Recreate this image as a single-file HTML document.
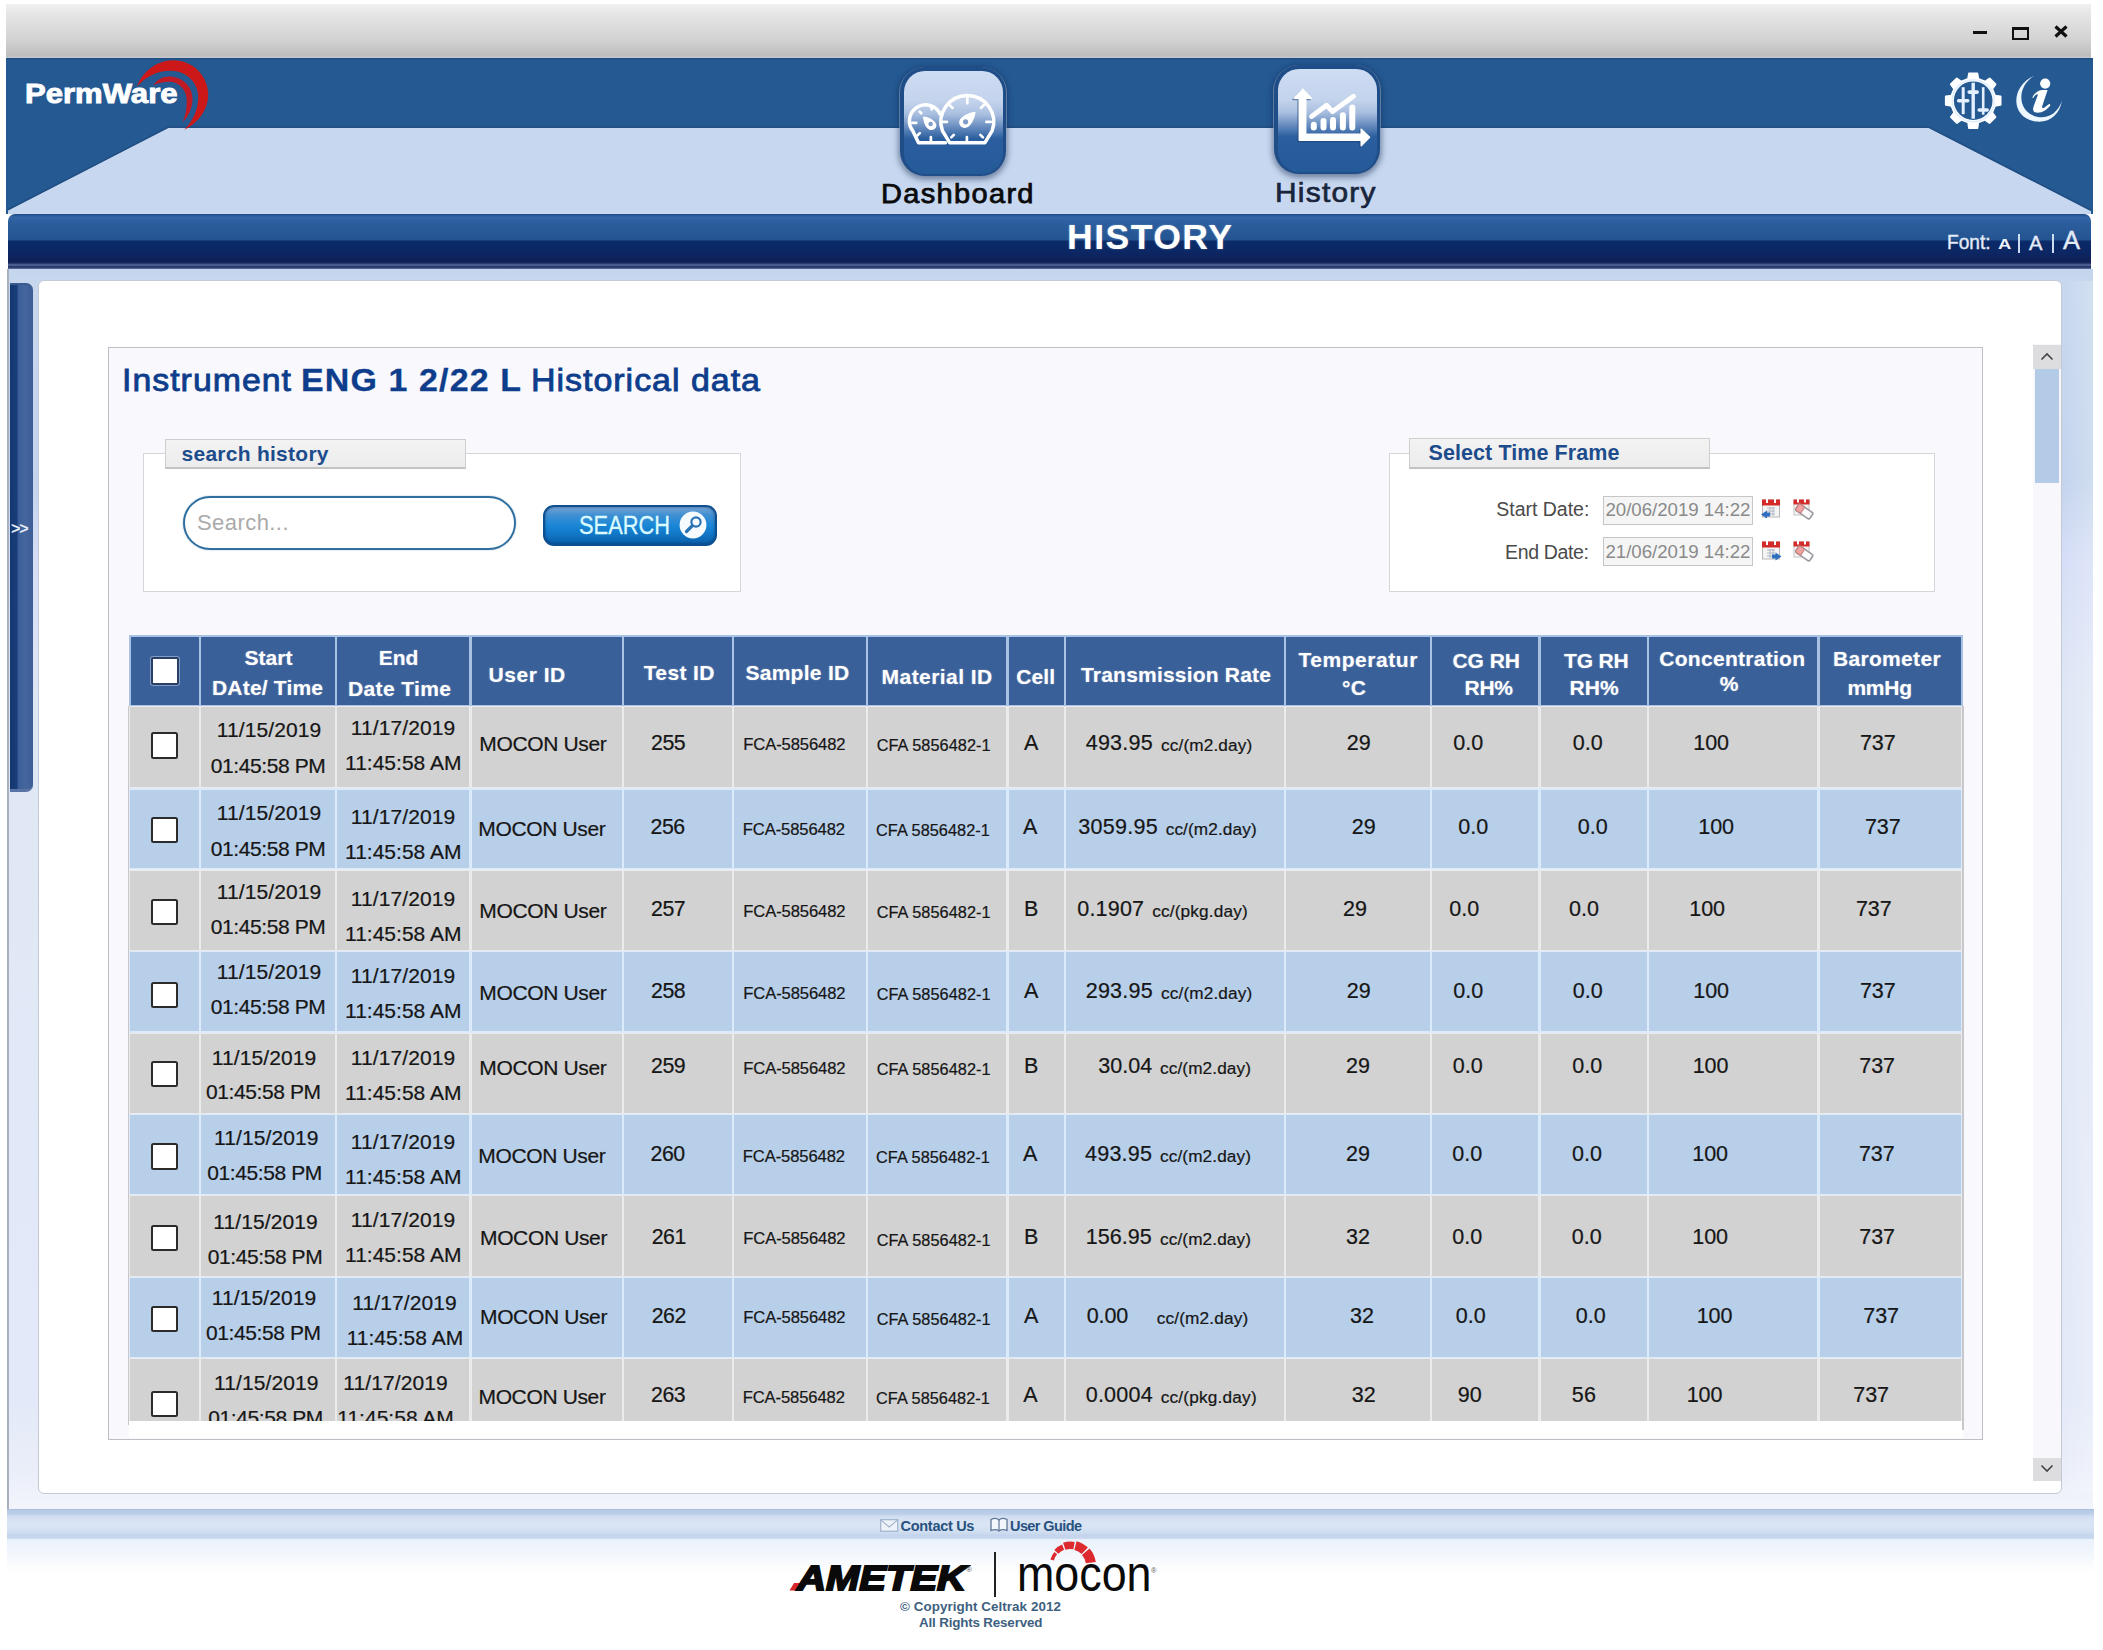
<!DOCTYPE html><html><head><meta charset="utf-8"><title>PermWare History</title><style>
html,body{margin:0;padding:0;}
body{width:2103px;height:1650px;position:relative;overflow:hidden;background:#fff;font-family:"Liberation Sans",sans-serif;}
.b{position:absolute;box-sizing:border-box;}
.t{position:absolute;white-space:nowrap;line-height:1;}
svg{position:absolute;overflow:visible;}
</style></head><body>
<div class="b" style="left:6px;top:4px;width:2085px;height:54px;background:linear-gradient(#f0f0f0 0%,#e3e3e3 25%,#d3d3d3 65%,#c3c2c2 90%,#bdbcbe 96%,#c6cad2 100%);"></div>
<div class="b" style="left:1973px;top:31px;width:14px;height:3px;background:#111;"></div>
<div class="b" style="left:2012px;top:27px;width:17px;height:13px;border:2px solid #111;border-top-width:3px;"></div>
<svg style="left:2053px;top:24px" width="16" height="16"><path d="M2.5 2.5 L13.5 12.5 M13.5 2.5 L2.5 12.5" stroke="#111" stroke-width="3.2" fill="none"/></svg>
<div class="b" style="left:6px;top:58px;width:2087px;height:156px;background:linear-gradient(#1f4a7e 0px,#245992 2.5px);"></div>
<svg style="left:0;top:0" width="2103" height="220"><polygon points="8,214 8,210.5 168,128 1929,128 2091,211 2091,214" fill="#c6d7ef"/><polyline points="8,209.6 168,127.2 1929,127.2 2091,210.2" fill="none" stroke="#1f4b80" stroke-width="1.6" opacity=".8"/></svg>
<svg style="left:0;top:0" width="260" height="140"><path d="M137.1,86.4 C142,72.5 156,60.2 173.2,60.2 C192.5,60.2 208.2,75.5 208.2,94.7 C208.2,109.5 198.5,122.5 184.2,130 C193,121 198.3,109.5 198.3,96.8 C198.3,82.4 186,70.7 171.1,70.7 C157,70.7 146,76.5 137.1,86.4 Z" fill="#cc1818"/><path d="M153.3,85.3 C157,79.5 163,76.4 169,76.4 C182,76.4 192.5,86 192.5,99 C192.5,108 188.5,116.5 182.6,122.3 C185.6,115.5 186.8,108 186.8,100.5 C186.8,90 179,81.8 169.5,81.8 C163,81.8 158,83 153.3,85.3 Z" fill="#c01a24"/></svg>
<span class="t" style="left:24.50px;top:80.49px;font-size:27.3px;color:#fff;font-family:'Liberation Sans',sans-serif;font-weight:bold;transform:scaleX(1.1378);transform-origin:0 0;-webkit-text-stroke:0.9px #fff;">PermWare</span>
<div class="b" style="left:900px;top:66.5px;width:105.5px;height:109px;border-radius:25px;background:#1f4d88;box-shadow:0 2px 6px 1px rgba(10,30,70,.55), 0 1px 0 1px rgba(215,230,250,.55);"></div><div class="b" style="left:903.5px;top:70.5px;width:99.0px;height:103.5px;border-radius:21px;background:linear-gradient(#cfddf3 0%,#c3d3ec 30%,#aabfe0 42%,#5f86bb 56%,#2a5e9e 66%,#255a99 100%);"></div><svg style="left:0;top:0" width="2103" height="220" fill="none" stroke="#fff" stroke-width="3.5" stroke-linecap="round" stroke-linejoin="round"><path d="M945.5,142.8 L918.5,142.8 L913,131.2 A16.2 16.2 0 1 1 940.3,114.2"/><path d="M949.8,142.8 L942.5,130.9 A26.4 26.4 0 1 1 992.1,130.9 L984.8,142.8 Z"/><g stroke-width="2.7"><path d="M930.9,106.4l0.9,2.9 M919.8,111.7l1.5,1.5 M912.3,122.9h4 M917.3,135.5l2.5,-2.4 M930.9,137v5"/><path d="M967.3,96.9v6.4 M942.6,121.9h4.4 M986.4,121.9h4.4 M949,104.6l3.6,3.3 M984.4,104.6l-3.5,3.3 M951.3,137.4l2.5,-2.5 M982.9,137.4l-2.5,-2.5 M966.9,137v5"/></g><path d="M923.6,117.2 C928.5,117.6 934.5,120.5 935.8,125 C936.3,128 933,130 930,129.3 C926.5,128.3 924.3,122.5 923.6,117.2Z" fill="#fff" stroke-width="1.2"/><circle cx="930.6" cy="124" r="2.2" fill="#7e9cc8" stroke="none"/><path d="M975,112.3 C974.3,117.5 971,125 966.5,127 C962.5,128.3 959,125 960,121 C961.3,116.5 969.5,113 975,112.3Z" fill="#fff" stroke-width="1.2"/><circle cx="965.6" cy="121.8" r="2.6" fill="#7e9cc8" stroke="none"/></svg>
<div class="b" style="left:1274px;top:65px;width:106px;height:108.5px;border-radius:25px;background:#1f4d88;box-shadow:0 2px 6px 1px rgba(10,30,70,.55), 0 1px 0 1px rgba(215,230,250,.55);"></div><div class="b" style="left:1277.5px;top:69px;width:99.5px;height:103.0px;border-radius:21px;background:linear-gradient(#cfddf3 0%,#c3d3ec 30%,#aabfe0 42%,#5f86bb 56%,#2a5e9e 66%,#255a99 100%);"></div><svg style="left:0;top:0" width="2103" height="220"><g transform="translate(-1.2,1.2)" fill="#1c3f78" stroke="#1c3f78" opacity=".55"><path d="M1299.3,140.3 V98.3 H1294.2 L1302.7,89.3 L1311.2,98.3 H1305.7 V134.2 H1361.2 V129.2 L1369.6,137.3 L1361.2,145.6 V140.3 Z" stroke-width="1.5" stroke-linejoin="round"/></g><g fill="#fff" stroke="#fff"><path d="M1299.3,140.3 V98.3 H1294.2 L1302.7,89.3 L1311.2,98.3 H1305.7 V134.2 H1361.2 V129.2 L1369.6,137.3 L1361.2,145.6 V140.3 Z" stroke-width="1.5" stroke-linejoin="round"/><g stroke-width="6" stroke-linecap="round" fill="none"><path d="M1313.8,124.8V127.6 M1323.5,121V127.6 M1333,120V127.6 M1342.9,115.2V127.6 M1352.3,107.5V127.6"/></g><path d="M1311.5,116.5 L1326.6,105.2 L1332.6,111.6 L1353.5,96.3" stroke-width="4.9" stroke-linecap="round" stroke-linejoin="round" fill="none"/></g></svg>
<span class="t" style="left:881.00px;top:180.74px;font-size:27px;color:#0a0a0a;font-family:'Liberation Sans',sans-serif;letter-spacing:1.230px;transform:scaleX(1.0745);transform-origin:0 0;-webkit-text-stroke:0.75px #0a0a0a;">Dashboard</span>
<span class="t" style="left:1274.60px;top:178.64px;font-size:27.6px;color:#18253c;font-family:'Liberation Sans',sans-serif;letter-spacing:1.171px;transform:scaleX(1.0818);transform-origin:0 0;-webkit-text-stroke:0.7px #18253c;text-shadow:0 1px 1px rgba(255,255,255,.5);">History</span>
<svg style="left:0;top:0" width="2103" height="220"><path d="M1968.2,79.0 L1969.1,73.4 L1977.3,73.4 L1978.2,79.0 L1985.1,81.8 L1989.6,78.5 L1995.4,84.3 L1992.1,88.8 L1994.9,95.7 L2000.5,96.6 L2000.5,104.8 L1994.9,105.7 L1992.1,112.6 L1995.4,117.1 L1989.6,122.9 L1985.1,119.6 L1978.2,122.4 L1977.3,128.0 L1969.1,128.0 L1968.2,122.4 L1961.3,119.6 L1956.8,122.9 L1951.0,117.1 L1954.3,112.6 L1951.5,105.7 L1945.9,104.8 L1945.9,96.6 L1951.5,95.7 L1954.3,88.8 L1951.0,84.3 L1956.8,78.5 L1961.3,81.8Z" fill="#fff" stroke="#fff" stroke-width="2" stroke-linejoin="round"/><circle cx="1973.2" cy="100.7" r="19.3" fill="#245992"/><circle cx="1973.2" cy="100.7" r="21" fill="none" stroke="#dfeeff" stroke-width="1.5"/><g stroke="#e4f0ff" stroke-linecap="butt"><path d="M1963.2,87.2V114.2" stroke-width="3"/><path d="M1973.2,82.7V118.7" stroke-width="3.4"/><path d="M1983.2,87.2V114.7" stroke-width="2.6"/><path d="M1958.7,100.7h9 M1969.2,92.10000000000001h8 M1979.2,110.0h8" stroke-width="3.6" stroke-linecap="round"/></g><path d="M2034.5,75.5 C2010,86 2010,118 2036,121.5 C2050,123 2060,114 2061.8,101 C2058,113 2048,118.5 2038,117 C2018,113 2015,88 2034.5,75.5 Z" fill="#eef6ff"/></svg>
<svg style="left:0;top:0" width="2103" height="220"><circle cx="2045.2" cy="83.6" r="5.1" fill="#fff"/><path d="M2032.2,97.6 C2034,93.6 2038,90.4 2042,90 L2047.6,90 L2042.2,106.3 C2041.7,108.2 2043,108.5 2044.5,107.5 C2046.3,106.2 2048,104.6 2049.6,103.8 L2050.4,105.2 C2047.6,109.2 2042.6,112.7 2037.6,112.7 C2033.4,112.7 2032.4,110 2033.5,106.8 L2037.7,95.3 C2038.2,93.8 2036.8,93.9 2035.8,94.8 C2034.8,95.7 2033.9,96.9 2033.3,97.9 Z" fill="#fff"/></svg>
<div class="b" style="left:8px;top:214px;width:2083px;height:55px;border-radius:7px 7px 0 0;background:linear-gradient(#1d4a86 0px,#3465a4 3px,#2b5d9d 10px,#245491 26px,#0a2a68 27px,#0c2662 40px,#111e54 48px,#1b2a60 49px,#5c6d9c 51px,#39497e 52px,#1b2a5e 53px,#6a7aa6 55px);"></div>
<span class="t" style="left:1067.00px;top:219.66px;font-size:35.6px;color:#fff;font-family:'Liberation Sans',sans-serif;font-weight:bold;letter-spacing:1.455px;text-shadow:0 0 2px rgba(255,255,255,.35);">HISTORY</span>
<span class="t" style="left:1946.60px;top:232.89px;font-size:19.5px;color:#e3ebf7;font-family:'Liberation Sans',sans-serif;transform:scaleX(0.9812);transform-origin:0 0;-webkit-text-stroke:0.4px #e3ebf7;">Font:</span>
<span class="t" style="left:1997.50px;top:237.72px;font-size:13.8px;color:#eef3fb;font-family:'Liberation Sans',sans-serif;font-weight:bold;transform:scaleX(1.3345);transform-origin:0 0;">A</span>
<div class="b" style="left:2018.2px;top:234px;width:2.3px;height:18.5px;background:#cfdcf0;"></div>
<span class="t" style="left:2029.40px;top:231.62px;font-size:21px;color:#e3ebf7;font-family:'Liberation Sans',sans-serif;transform:scaleX(0.9567);transform-origin:0 0;-webkit-text-stroke:0.4px #e3ebf7;">A</span>
<div class="b" style="left:2051.8px;top:234px;width:2.3px;height:18.5px;background:#cfdcf0;"></div>
<span class="t" style="left:2063.40px;top:227.81px;font-size:25.5px;color:#e3ebf7;font-family:'Liberation Sans',sans-serif;transform:scaleX(0.9995);transform-origin:0 0;-webkit-text-stroke:0.4px #e3ebf7;">A</span>
<div class="b" style="left:7px;top:269px;width:2086px;height:1240px;background:linear-gradient(#c4d6ee 0px,#c6d7ee 12px,#c3d4ec 211px,#d6def7 291px,#dfe7f5 431px,#e3e9f8 1131px,#eaeef9 1200px,#f2f5fb 1240px);border-left:2.6px solid #a9b1bf;"></div>
<div class="b" style="left:2062px;top:281px;width:31px;height:1212px;background:linear-gradient(90deg,rgba(255,255,255,0) 0%,rgba(255,255,255,.22) 100%);"></div>
<div class="b" style="left:10px;top:283px;width:23px;height:509px;border-radius:0 7px 7px 0;background:linear-gradient(90deg,#14376f 0px,#193e7b 7px,#3c5f98 8.5px,#45679e 15px,#3b5c94 23px);border-top:2px solid #3a5a90;border-bottom:3px solid #5874a6;"></div>
<span class="t" style="left:11.00px;top:520.96px;font-size:16px;color:#e4ebf7;font-family:'Liberation Sans',sans-serif;font-weight:bold;letter-spacing:-1.188px;">&gt;&gt;</span>
<div class="b" style="left:37.5px;top:280px;width:2024.5px;height:1214px;background:#fff;border:1.5px solid #c3cad6;border-radius:6px;"></div>
<div class="b" style="left:2033px;top:344px;width:28px;height:1137px;background:#f8f7fc;"></div>
<div class="b" style="left:2033px;top:344.5px;width:27.5px;height:24px;background:#dddcde;"></div>
<svg style="left:2033px;top:344px" width="28" height="24"><path d="M8.5,15.5 L14,10 L19.5,15.5" stroke="#444" stroke-width="1.6" fill="none"/></svg>
<div class="b" style="left:2035px;top:369px;width:24px;height:114px;background:#b4cbe8;"></div>
<div class="b" style="left:2033px;top:1457.5px;width:27.5px;height:23px;background:#dddcde;"></div>
<svg style="left:2033px;top:1457px" width="28" height="24"><path d="M8.5,8.5 L14,14 L19.5,8.5" stroke="#444" stroke-width="1.6" fill="none"/></svg>
<div class="b" style="left:107.5px;top:346.5px;width:1875px;height:1093px;background:#f8f8fd;border:1.8px solid #bfbfc3;"></div>
<div class="b" style="left:129px;top:1421px;width:1833.5px;height:17px;background:#fff;"></div>
<span class="t" style="left:122.00px;top:363.91px;font-size:32px;color:#0d3d8b;font-family:'Liberation Sans',sans-serif;letter-spacing:0.963px;transform:scaleX(1.0573);transform-origin:0 0;-webkit-text-stroke:0.85px #0d3d8b;">Instrument</span>
<span class="t" style="left:300.50px;top:363.91px;font-size:32px;color:#0d3d8b;font-family:'Liberation Sans',sans-serif;font-weight:bold;letter-spacing:1.075px;transform:scaleX(1.0604);transform-origin:0 0;-webkit-text-stroke:0.3px #0d3d8b;">ENG 1 2/22 L</span>
<span class="t" style="left:530.50px;top:363.91px;font-size:32px;color:#0d3d8b;font-family:'Liberation Sans',sans-serif;letter-spacing:0.909px;transform:scaleX(1.0628);transform-origin:0 0;-webkit-text-stroke:0.85px #0d3d8b;">Historical data</span>
<div class="b" style="left:143px;top:453px;width:597.8px;height:139.3px;background:#fff;border:1.5px solid #d6d6da;"></div>
<div class="b" style="left:165px;top:438.5px;width:301px;height:30.5px;background:linear-gradient(#f3f3f3,#ececec);border:1.5px solid #cfcfcf;border-bottom:2px solid #c2c2c2;"></div>
<span class="t" style="left:181.50px;top:442.52px;font-size:21px;color:#1d4c8c;font-family:'Liberation Sans',sans-serif;font-weight:bold;letter-spacing:0.264px;">search history</span>
<div class="b" style="left:182.5px;top:496px;width:333.5px;height:53.5px;background:#fff;border:2.2px solid #2f6f9f;border-radius:27px;box-shadow:0 0 2px rgba(60,110,160,.4);"></div>
<span class="t" style="left:197.00px;top:512.38px;font-size:22px;color:#aaaaaa;font-family:'Liberation Sans',sans-serif;letter-spacing:0.432px;">Search...</span>
<div class="b" style="left:543px;top:505px;width:173.5px;height:41px;border-radius:11px;border:2px solid #0d4f8f;background:linear-gradient(#77a6d6 0%,#3f8fd2 22%,#1a86d6 50%,#1178c8 72%,#0b5ea8 100%);box-shadow:inset 0 0 3px rgba(0,40,90,.6);"></div>
<span class="t" style="left:579.00px;top:512.91px;font-size:25.5px;color:#dafaff;font-family:'Liberation Sans',sans-serif;transform:scaleX(0.8563);transform-origin:0 0;-webkit-text-stroke:0.3px #dafaff;">SEARCH</span>
<svg style="left:679px;top:511px" width="30" height="30"><circle cx="14" cy="14" r="13.4" fill="#f6fbff"/><circle cx="17" cy="11" r="4.6" fill="#f6fbff" stroke="#2a72b4" stroke-width="2.2"/><path d="M13.4,14.6 L7.5,20.5" stroke="#2a72b4" stroke-width="3.2" stroke-linecap="round"/></svg>
<div class="b" style="left:1388.5px;top:452.5px;width:546px;height:139.5px;background:#fff;border:1.5px solid #d6d6da;"></div>
<div class="b" style="left:1409px;top:438px;width:301px;height:30.5px;background:linear-gradient(#f3f3f3,#ececec);border:1.5px solid #cfcfcf;border-bottom:2px solid #c2c2c2;"></div>
<span class="t" style="left:1428.50px;top:442.60px;font-size:21.5px;color:#1d4c8c;font-family:'Liberation Sans',sans-serif;font-weight:bold;letter-spacing:0.086px;">Select Time Frame</span>
<span class="t" style="left:1496.30px;top:500.49px;font-size:19.5px;color:#4a4a4a;font-family:'Liberation Sans',sans-serif;letter-spacing:-0.021px;">Start Date:</span>
<span class="t" style="left:1505.00px;top:542.79px;font-size:19.5px;color:#4a4a4a;font-family:'Liberation Sans',sans-serif;letter-spacing:-0.340px;">End Date:</span>
<div class="b" style="left:1603px;top:495.5px;width:150px;height:29px;background:#f5f5f5;border:1.5px solid #c6c6c6;"></div>
<span class="t" style="left:1605.50px;top:500.67px;font-size:18.7px;color:#8a8a8a;font-family:'Liberation Sans',sans-serif;letter-spacing:-0.039px;">20/06/2019 14:22</span>
<div class="b" style="left:1603px;top:537px;width:150px;height:29px;background:#f5f5f5;border:1.5px solid #c6c6c6;"></div>
<span class="t" style="left:1605.50px;top:542.67px;font-size:18.7px;color:#8a8a8a;font-family:'Liberation Sans',sans-serif;letter-spacing:-0.039px;">21/06/2019 14:22</span>
<svg style="left:1761px;top:499px" width="22" height="22"><rect x="1.5" y="1" width="17" height="17" fill="#f4f4f4" stroke="#b8b8b8" stroke-width="1"/><rect x="1" y="0.5" width="18" height="6" fill="#d42a2a"/><rect x="5" y="0" width="2" height="4" fill="#fff"/><rect x="13" y="0" width="2" height="4" fill="#fff"/><path d="M6,9h8M6,12h8M6,15h8M9,8v9M12,8v9" stroke="#b0b8c4" stroke-width="1"/><path d="M0,15.5 L6,11.5 V19.5 Z" fill="#2e6fc0"/><rect x="5" y="13.5" width="4" height="4" fill="#2e6fc0"/></svg>
<svg style="left:1793px;top:499px" width="22" height="22"><rect x="1" y="1" width="15" height="15" fill="#f6f6f6" stroke="#c4c4c4" stroke-width="1"/><rect x="0.5" y="0.5" width="16" height="5" fill="#d42a2a"/><rect x="4" y="0" width="2" height="3.5" fill="#fff"/><rect x="11" y="0" width="2" height="3.5" fill="#fff"/><g transform="rotate(35 11 12)"><rect x="3" y="8.5" width="17" height="7.5" rx="1.5" fill="#fbfbfd" stroke="#9a9a9e" stroke-width="1.6"/><rect x="3" y="8.5" width="6.5" height="7.5" rx="1.5" fill="#f0a3a3" stroke="#c47a7a" stroke-width="1"/></g></svg>
<svg style="left:1761px;top:540.5px" width="22" height="22"><rect x="1.5" y="1" width="17" height="17" fill="#f4f4f4" stroke="#b8b8b8" stroke-width="1"/><rect x="1" y="0.5" width="18" height="6" fill="#d42a2a"/><rect x="5" y="0" width="2" height="4" fill="#fff"/><rect x="13" y="0" width="2" height="4" fill="#fff"/><path d="M6,9h8M6,12h8M6,15h8M9,8v9M12,8v9" stroke="#b0b8c4" stroke-width="1"/><path d="M20.5,15.5 L14.5,11.5 V19.5 Z" fill="#2e6fc0"/><rect x="11" y="13.5" width="4" height="4" fill="#2e6fc0"/></svg>
<svg style="left:1793px;top:540.5px" width="22" height="22"><rect x="1" y="1" width="15" height="15" fill="#f6f6f6" stroke="#c4c4c4" stroke-width="1"/><rect x="0.5" y="0.5" width="16" height="5" fill="#d42a2a"/><rect x="4" y="0" width="2" height="3.5" fill="#fff"/><rect x="11" y="0" width="2" height="3.5" fill="#fff"/><g transform="rotate(35 11 12)"><rect x="3" y="8.5" width="17" height="7.5" rx="1.5" fill="#fbfbfd" stroke="#9a9a9e" stroke-width="1.6"/><rect x="3" y="8.5" width="6.5" height="7.5" rx="1.5" fill="#f0a3a3" stroke="#c47a7a" stroke-width="1"/></g></svg>
<div class="b" style="left:128.5px;top:634.5px;width:1834.5px;height:786.5px;background:#e9eef6;"></div>
<div class="b" style="left:128.5px;top:634.5px;width:1834.5px;height:72px;background:#a9c1e2;"></div>
<div class="b" style="left:131.0px;top:637.2px;width:68.0px;height:67.6px;background:#3a6099;"></div>
<div class="b" style="left:201.2px;top:637.2px;width:133.6px;height:67.6px;background:#3a6099;"></div>
<div class="b" style="left:337.0px;top:637.2px;width:132.3px;height:67.6px;background:#3a6099;"></div>
<div class="b" style="left:471.5px;top:637.2px;width:150.5px;height:67.6px;background:#3a6099;"></div>
<div class="b" style="left:624.2px;top:637.2px;width:107.8px;height:67.6px;background:#3a6099;"></div>
<div class="b" style="left:734.2px;top:637.2px;width:131.4px;height:67.6px;background:#3a6099;"></div>
<div class="b" style="left:867.8px;top:637.2px;width:138.7px;height:67.6px;background:#3a6099;"></div>
<div class="b" style="left:1008.7px;top:637.2px;width:55.3px;height:67.6px;background:#3a6099;"></div>
<div class="b" style="left:1066.2px;top:637.2px;width:217.8px;height:67.6px;background:#3a6099;"></div>
<div class="b" style="left:1286.2px;top:637.2px;width:143.8px;height:67.6px;background:#3a6099;"></div>
<div class="b" style="left:1432.2px;top:637.2px;width:106.3px;height:67.6px;background:#3a6099;"></div>
<div class="b" style="left:1540.7px;top:637.2px;width:106.3px;height:67.6px;background:#3a6099;"></div>
<div class="b" style="left:1649.2px;top:637.2px;width:168.1px;height:67.6px;background:#3a6099;"></div>
<div class="b" style="left:1819.5px;top:637.2px;width:141.5px;height:67.6px;background:#3a6099;"></div>
<div class="b" style="left:128.5px;top:705.8px;width:1834.5px;height:82.6px;background:#ebebeb;"></div>
<div class="b" style="left:129.5px;top:707.0px;width:69.5px;height:80.4px;background:#d2d2d2;"></div>
<div class="b" style="left:201.2px;top:707.0px;width:133.6px;height:80.4px;background:#d2d2d2;"></div>
<div class="b" style="left:337.0px;top:707.0px;width:132.3px;height:80.4px;background:#d2d2d2;"></div>
<div class="b" style="left:471.5px;top:707.0px;width:150.5px;height:80.4px;background:#d2d2d2;"></div>
<div class="b" style="left:624.2px;top:707.0px;width:107.8px;height:80.4px;background:#d2d2d2;"></div>
<div class="b" style="left:734.2px;top:707.0px;width:131.4px;height:80.4px;background:#d2d2d2;"></div>
<div class="b" style="left:867.8px;top:707.0px;width:138.7px;height:80.4px;background:#d2d2d2;"></div>
<div class="b" style="left:1008.7px;top:707.0px;width:55.3px;height:80.4px;background:#d2d2d2;"></div>
<div class="b" style="left:1066.2px;top:707.0px;width:217.8px;height:80.4px;background:#d2d2d2;"></div>
<div class="b" style="left:1286.2px;top:707.0px;width:143.8px;height:80.4px;background:#d2d2d2;"></div>
<div class="b" style="left:1432.2px;top:707.0px;width:106.3px;height:80.4px;background:#d2d2d2;"></div>
<div class="b" style="left:1540.7px;top:707.0px;width:106.3px;height:80.4px;background:#d2d2d2;"></div>
<div class="b" style="left:1649.2px;top:707.0px;width:168.1px;height:80.4px;background:#d2d2d2;"></div>
<div class="b" style="left:1819.5px;top:707.0px;width:141.5px;height:80.4px;background:#d2d2d2;"></div>
<div class="b" style="left:128.5px;top:788.4px;width:1834.5px;height:81.1px;background:#dcebfb;"></div>
<div class="b" style="left:129.5px;top:789.6px;width:69.5px;height:78.9px;background:#b8cfea;"></div>
<div class="b" style="left:201.2px;top:789.6px;width:133.6px;height:78.9px;background:#b8cfea;"></div>
<div class="b" style="left:337.0px;top:789.6px;width:132.3px;height:78.9px;background:#b8cfea;"></div>
<div class="b" style="left:471.5px;top:789.6px;width:150.5px;height:78.9px;background:#b8cfea;"></div>
<div class="b" style="left:624.2px;top:789.6px;width:107.8px;height:78.9px;background:#b8cfea;"></div>
<div class="b" style="left:734.2px;top:789.6px;width:131.4px;height:78.9px;background:#b8cfea;"></div>
<div class="b" style="left:867.8px;top:789.6px;width:138.7px;height:78.9px;background:#b8cfea;"></div>
<div class="b" style="left:1008.7px;top:789.6px;width:55.3px;height:78.9px;background:#b8cfea;"></div>
<div class="b" style="left:1066.2px;top:789.6px;width:217.8px;height:78.9px;background:#b8cfea;"></div>
<div class="b" style="left:1286.2px;top:789.6px;width:143.8px;height:78.9px;background:#b8cfea;"></div>
<div class="b" style="left:1432.2px;top:789.6px;width:106.3px;height:78.9px;background:#b8cfea;"></div>
<div class="b" style="left:1540.7px;top:789.6px;width:106.3px;height:78.9px;background:#b8cfea;"></div>
<div class="b" style="left:1649.2px;top:789.6px;width:168.1px;height:78.9px;background:#b8cfea;"></div>
<div class="b" style="left:1819.5px;top:789.6px;width:141.5px;height:78.9px;background:#b8cfea;"></div>
<div class="b" style="left:128.5px;top:869.5px;width:1834.5px;height:81.5px;background:#ebebeb;"></div>
<div class="b" style="left:129.5px;top:870.7px;width:69.5px;height:79.3px;background:#d2d2d2;"></div>
<div class="b" style="left:201.2px;top:870.7px;width:133.6px;height:79.3px;background:#d2d2d2;"></div>
<div class="b" style="left:337.0px;top:870.7px;width:132.3px;height:79.3px;background:#d2d2d2;"></div>
<div class="b" style="left:471.5px;top:870.7px;width:150.5px;height:79.3px;background:#d2d2d2;"></div>
<div class="b" style="left:624.2px;top:870.7px;width:107.8px;height:79.3px;background:#d2d2d2;"></div>
<div class="b" style="left:734.2px;top:870.7px;width:131.4px;height:79.3px;background:#d2d2d2;"></div>
<div class="b" style="left:867.8px;top:870.7px;width:138.7px;height:79.3px;background:#d2d2d2;"></div>
<div class="b" style="left:1008.7px;top:870.7px;width:55.3px;height:79.3px;background:#d2d2d2;"></div>
<div class="b" style="left:1066.2px;top:870.7px;width:217.8px;height:79.3px;background:#d2d2d2;"></div>
<div class="b" style="left:1286.2px;top:870.7px;width:143.8px;height:79.3px;background:#d2d2d2;"></div>
<div class="b" style="left:1432.2px;top:870.7px;width:106.3px;height:79.3px;background:#d2d2d2;"></div>
<div class="b" style="left:1540.7px;top:870.7px;width:106.3px;height:79.3px;background:#d2d2d2;"></div>
<div class="b" style="left:1649.2px;top:870.7px;width:168.1px;height:79.3px;background:#d2d2d2;"></div>
<div class="b" style="left:1819.5px;top:870.7px;width:141.5px;height:79.3px;background:#d2d2d2;"></div>
<div class="b" style="left:128.5px;top:951px;width:1834.5px;height:81.5px;background:#dcebfb;"></div>
<div class="b" style="left:129.5px;top:952.2px;width:69.5px;height:79.3px;background:#b8cfea;"></div>
<div class="b" style="left:201.2px;top:952.2px;width:133.6px;height:79.3px;background:#b8cfea;"></div>
<div class="b" style="left:337.0px;top:952.2px;width:132.3px;height:79.3px;background:#b8cfea;"></div>
<div class="b" style="left:471.5px;top:952.2px;width:150.5px;height:79.3px;background:#b8cfea;"></div>
<div class="b" style="left:624.2px;top:952.2px;width:107.8px;height:79.3px;background:#b8cfea;"></div>
<div class="b" style="left:734.2px;top:952.2px;width:131.4px;height:79.3px;background:#b8cfea;"></div>
<div class="b" style="left:867.8px;top:952.2px;width:138.7px;height:79.3px;background:#b8cfea;"></div>
<div class="b" style="left:1008.7px;top:952.2px;width:55.3px;height:79.3px;background:#b8cfea;"></div>
<div class="b" style="left:1066.2px;top:952.2px;width:217.8px;height:79.3px;background:#b8cfea;"></div>
<div class="b" style="left:1286.2px;top:952.2px;width:143.8px;height:79.3px;background:#b8cfea;"></div>
<div class="b" style="left:1432.2px;top:952.2px;width:106.3px;height:79.3px;background:#b8cfea;"></div>
<div class="b" style="left:1540.7px;top:952.2px;width:106.3px;height:79.3px;background:#b8cfea;"></div>
<div class="b" style="left:1649.2px;top:952.2px;width:168.1px;height:79.3px;background:#b8cfea;"></div>
<div class="b" style="left:1819.5px;top:952.2px;width:141.5px;height:79.3px;background:#b8cfea;"></div>
<div class="b" style="left:128.5px;top:1032.5px;width:1834.5px;height:81.5px;background:#ebebeb;"></div>
<div class="b" style="left:129.5px;top:1033.7px;width:69.5px;height:79.3px;background:#d2d2d2;"></div>
<div class="b" style="left:201.2px;top:1033.7px;width:133.6px;height:79.3px;background:#d2d2d2;"></div>
<div class="b" style="left:337.0px;top:1033.7px;width:132.3px;height:79.3px;background:#d2d2d2;"></div>
<div class="b" style="left:471.5px;top:1033.7px;width:150.5px;height:79.3px;background:#d2d2d2;"></div>
<div class="b" style="left:624.2px;top:1033.7px;width:107.8px;height:79.3px;background:#d2d2d2;"></div>
<div class="b" style="left:734.2px;top:1033.7px;width:131.4px;height:79.3px;background:#d2d2d2;"></div>
<div class="b" style="left:867.8px;top:1033.7px;width:138.7px;height:79.3px;background:#d2d2d2;"></div>
<div class="b" style="left:1008.7px;top:1033.7px;width:55.3px;height:79.3px;background:#d2d2d2;"></div>
<div class="b" style="left:1066.2px;top:1033.7px;width:217.8px;height:79.3px;background:#d2d2d2;"></div>
<div class="b" style="left:1286.2px;top:1033.7px;width:143.8px;height:79.3px;background:#d2d2d2;"></div>
<div class="b" style="left:1432.2px;top:1033.7px;width:106.3px;height:79.3px;background:#d2d2d2;"></div>
<div class="b" style="left:1540.7px;top:1033.7px;width:106.3px;height:79.3px;background:#d2d2d2;"></div>
<div class="b" style="left:1649.2px;top:1033.7px;width:168.1px;height:79.3px;background:#d2d2d2;"></div>
<div class="b" style="left:1819.5px;top:1033.7px;width:141.5px;height:79.3px;background:#d2d2d2;"></div>
<div class="b" style="left:128.5px;top:1114px;width:1834.5px;height:81.2px;background:#dcebfb;"></div>
<div class="b" style="left:129.5px;top:1115.2px;width:69.5px;height:79.0px;background:#b8cfea;"></div>
<div class="b" style="left:201.2px;top:1115.2px;width:133.6px;height:79.0px;background:#b8cfea;"></div>
<div class="b" style="left:337.0px;top:1115.2px;width:132.3px;height:79.0px;background:#b8cfea;"></div>
<div class="b" style="left:471.5px;top:1115.2px;width:150.5px;height:79.0px;background:#b8cfea;"></div>
<div class="b" style="left:624.2px;top:1115.2px;width:107.8px;height:79.0px;background:#b8cfea;"></div>
<div class="b" style="left:734.2px;top:1115.2px;width:131.4px;height:79.0px;background:#b8cfea;"></div>
<div class="b" style="left:867.8px;top:1115.2px;width:138.7px;height:79.0px;background:#b8cfea;"></div>
<div class="b" style="left:1008.7px;top:1115.2px;width:55.3px;height:79.0px;background:#b8cfea;"></div>
<div class="b" style="left:1066.2px;top:1115.2px;width:217.8px;height:79.0px;background:#b8cfea;"></div>
<div class="b" style="left:1286.2px;top:1115.2px;width:143.8px;height:79.0px;background:#b8cfea;"></div>
<div class="b" style="left:1432.2px;top:1115.2px;width:106.3px;height:79.0px;background:#b8cfea;"></div>
<div class="b" style="left:1540.7px;top:1115.2px;width:106.3px;height:79.0px;background:#b8cfea;"></div>
<div class="b" style="left:1649.2px;top:1115.2px;width:168.1px;height:79.0px;background:#b8cfea;"></div>
<div class="b" style="left:1819.5px;top:1115.2px;width:141.5px;height:79.0px;background:#b8cfea;"></div>
<div class="b" style="left:128.5px;top:1195.2px;width:1834.5px;height:81.6px;background:#ebebeb;"></div>
<div class="b" style="left:129.5px;top:1196.4px;width:69.5px;height:79.4px;background:#d2d2d2;"></div>
<div class="b" style="left:201.2px;top:1196.4px;width:133.6px;height:79.4px;background:#d2d2d2;"></div>
<div class="b" style="left:337.0px;top:1196.4px;width:132.3px;height:79.4px;background:#d2d2d2;"></div>
<div class="b" style="left:471.5px;top:1196.4px;width:150.5px;height:79.4px;background:#d2d2d2;"></div>
<div class="b" style="left:624.2px;top:1196.4px;width:107.8px;height:79.4px;background:#d2d2d2;"></div>
<div class="b" style="left:734.2px;top:1196.4px;width:131.4px;height:79.4px;background:#d2d2d2;"></div>
<div class="b" style="left:867.8px;top:1196.4px;width:138.7px;height:79.4px;background:#d2d2d2;"></div>
<div class="b" style="left:1008.7px;top:1196.4px;width:55.3px;height:79.4px;background:#d2d2d2;"></div>
<div class="b" style="left:1066.2px;top:1196.4px;width:217.8px;height:79.4px;background:#d2d2d2;"></div>
<div class="b" style="left:1286.2px;top:1196.4px;width:143.8px;height:79.4px;background:#d2d2d2;"></div>
<div class="b" style="left:1432.2px;top:1196.4px;width:106.3px;height:79.4px;background:#d2d2d2;"></div>
<div class="b" style="left:1540.7px;top:1196.4px;width:106.3px;height:79.4px;background:#d2d2d2;"></div>
<div class="b" style="left:1649.2px;top:1196.4px;width:168.1px;height:79.4px;background:#d2d2d2;"></div>
<div class="b" style="left:1819.5px;top:1196.4px;width:141.5px;height:79.4px;background:#d2d2d2;"></div>
<div class="b" style="left:128.5px;top:1276.8px;width:1834.5px;height:81.2px;background:#dcebfb;"></div>
<div class="b" style="left:129.5px;top:1278.0px;width:69.5px;height:79.0px;background:#b8cfea;"></div>
<div class="b" style="left:201.2px;top:1278.0px;width:133.6px;height:79.0px;background:#b8cfea;"></div>
<div class="b" style="left:337.0px;top:1278.0px;width:132.3px;height:79.0px;background:#b8cfea;"></div>
<div class="b" style="left:471.5px;top:1278.0px;width:150.5px;height:79.0px;background:#b8cfea;"></div>
<div class="b" style="left:624.2px;top:1278.0px;width:107.8px;height:79.0px;background:#b8cfea;"></div>
<div class="b" style="left:734.2px;top:1278.0px;width:131.4px;height:79.0px;background:#b8cfea;"></div>
<div class="b" style="left:867.8px;top:1278.0px;width:138.7px;height:79.0px;background:#b8cfea;"></div>
<div class="b" style="left:1008.7px;top:1278.0px;width:55.3px;height:79.0px;background:#b8cfea;"></div>
<div class="b" style="left:1066.2px;top:1278.0px;width:217.8px;height:79.0px;background:#b8cfea;"></div>
<div class="b" style="left:1286.2px;top:1278.0px;width:143.8px;height:79.0px;background:#b8cfea;"></div>
<div class="b" style="left:1432.2px;top:1278.0px;width:106.3px;height:79.0px;background:#b8cfea;"></div>
<div class="b" style="left:1540.7px;top:1278.0px;width:106.3px;height:79.0px;background:#b8cfea;"></div>
<div class="b" style="left:1649.2px;top:1278.0px;width:168.1px;height:79.0px;background:#b8cfea;"></div>
<div class="b" style="left:1819.5px;top:1278.0px;width:141.5px;height:79.0px;background:#b8cfea;"></div>
<div class="b" style="left:128.5px;top:1358px;width:1834.5px;height:63px;background:#ebebeb;"></div>
<div class="b" style="left:129.5px;top:1359.2px;width:69.5px;height:61.8px;background:#d2d2d2;"></div>
<div class="b" style="left:201.2px;top:1359.2px;width:133.6px;height:61.8px;background:#d2d2d2;"></div>
<div class="b" style="left:337.0px;top:1359.2px;width:132.3px;height:61.8px;background:#d2d2d2;"></div>
<div class="b" style="left:471.5px;top:1359.2px;width:150.5px;height:61.8px;background:#d2d2d2;"></div>
<div class="b" style="left:624.2px;top:1359.2px;width:107.8px;height:61.8px;background:#d2d2d2;"></div>
<div class="b" style="left:734.2px;top:1359.2px;width:131.4px;height:61.8px;background:#d2d2d2;"></div>
<div class="b" style="left:867.8px;top:1359.2px;width:138.7px;height:61.8px;background:#d2d2d2;"></div>
<div class="b" style="left:1008.7px;top:1359.2px;width:55.3px;height:61.8px;background:#d2d2d2;"></div>
<div class="b" style="left:1066.2px;top:1359.2px;width:217.8px;height:61.8px;background:#d2d2d2;"></div>
<div class="b" style="left:1286.2px;top:1359.2px;width:143.8px;height:61.8px;background:#d2d2d2;"></div>
<div class="b" style="left:1432.2px;top:1359.2px;width:106.3px;height:61.8px;background:#d2d2d2;"></div>
<div class="b" style="left:1540.7px;top:1359.2px;width:106.3px;height:61.8px;background:#d2d2d2;"></div>
<div class="b" style="left:1649.2px;top:1359.2px;width:168.1px;height:61.8px;background:#d2d2d2;"></div>
<div class="b" style="left:1819.5px;top:1359.2px;width:141.5px;height:61.8px;background:#d2d2d2;"></div>
<div class="b" style="left:128.2px;top:706px;width:1.3px;height:719px;background:#c8c8cc;"></div>
<div class="b" style="left:1962px;top:706px;width:1.5px;height:724px;background:#c8c8cc;"></div>
<span class="t" style="left:244.58px;top:647.22px;font-size:21px;color:#fff;font-family:'Liberation Sans',sans-serif;font-weight:bold;text-shadow:0 0 1.5px rgba(255,255,255,.45);">Start</span>
<span class="t" style="left:212.00px;top:676.52px;font-size:21px;color:#fff;font-family:'Liberation Sans',sans-serif;font-weight:bold;letter-spacing:0.188px;text-shadow:0 0 1.5px rgba(255,255,255,.45);">DAte/ Time</span>
<span class="t" style="left:378.67px;top:647.22px;font-size:21px;color:#fff;font-family:'Liberation Sans',sans-serif;font-weight:bold;text-shadow:0 0 1.5px rgba(255,255,255,.45);">End</span>
<span class="t" style="left:348.00px;top:677.72px;font-size:21px;color:#fff;font-family:'Liberation Sans',sans-serif;font-weight:bold;letter-spacing:0.377px;text-shadow:0 0 1.5px rgba(255,255,255,.45);">Date Time</span>
<span class="t" style="left:488.60px;top:663.82px;font-size:21px;color:#fff;font-family:'Liberation Sans',sans-serif;font-weight:bold;letter-spacing:0.512px;text-shadow:0 0 1.5px rgba(255,255,255,.45);">User ID</span>
<span class="t" style="left:643.70px;top:662.32px;font-size:21px;color:#fff;font-family:'Liberation Sans',sans-serif;font-weight:bold;letter-spacing:0.374px;text-shadow:0 0 1.5px rgba(255,255,255,.45);">Test ID</span>
<span class="t" style="left:745.40px;top:662.32px;font-size:21px;color:#fff;font-family:'Liberation Sans',sans-serif;font-weight:bold;letter-spacing:0.283px;text-shadow:0 0 1.5px rgba(255,255,255,.45);">Sample ID</span>
<span class="t" style="left:881.60px;top:665.92px;font-size:21px;color:#fff;font-family:'Liberation Sans',sans-serif;font-weight:bold;letter-spacing:0.430px;text-shadow:0 0 1.5px rgba(255,255,255,.45);">Material ID</span>
<span class="t" style="left:1016.30px;top:665.92px;font-size:21px;color:#fff;font-family:'Liberation Sans',sans-serif;font-weight:bold;letter-spacing:0.062px;text-shadow:0 0 1.5px rgba(255,255,255,.45);">Cell</span>
<span class="t" style="left:1081.00px;top:663.82px;font-size:21px;color:#fff;font-family:'Liberation Sans',sans-serif;font-weight:bold;letter-spacing:0.198px;text-shadow:0 0 1.5px rgba(255,255,255,.45);">Transmission Rate</span>
<span class="t" style="left:1298.40px;top:648.52px;font-size:21px;color:#fff;font-family:'Liberation Sans',sans-serif;font-weight:bold;letter-spacing:0.559px;text-shadow:0 0 1.5px rgba(255,255,255,.45);">Temperatur</span>
<span class="t" style="left:1342.00px;top:676.52px;font-size:21px;color:#fff;font-family:'Liberation Sans',sans-serif;font-weight:bold;letter-spacing:0.436px;text-shadow:0 0 1.5px rgba(255,255,255,.45);">°C</span>
<span class="t" style="left:1452.40px;top:649.82px;font-size:21px;color:#fff;font-family:'Liberation Sans',sans-serif;font-weight:bold;letter-spacing:-0.016px;text-shadow:0 0 1.5px rgba(255,255,255,.45);">CG RH</span>
<span class="t" style="left:1464.60px;top:676.52px;font-size:21px;color:#fff;font-family:'Liberation Sans',sans-serif;font-weight:bold;letter-spacing:-0.302px;text-shadow:0 0 1.5px rgba(255,255,255,.45);">RH%</span>
<span class="t" style="left:1564.00px;top:649.82px;font-size:21px;color:#fff;font-family:'Liberation Sans',sans-serif;font-weight:bold;letter-spacing:-0.157px;text-shadow:0 0 1.5px rgba(255,255,255,.45);">TG RH</span>
<span class="t" style="left:1569.60px;top:676.52px;font-size:21px;color:#fff;font-family:'Liberation Sans',sans-serif;font-weight:bold;text-shadow:0 0 1.5px rgba(255,255,255,.45);">RH%</span>
<span class="t" style="left:1659.30px;top:648.12px;font-size:21px;color:#fff;font-family:'Liberation Sans',sans-serif;font-weight:bold;letter-spacing:0.280px;text-shadow:0 0 1.5px rgba(255,255,255,.45);">Concentration</span>
<span class="t" style="left:1719.70px;top:673.42px;font-size:21px;color:#fff;font-family:'Liberation Sans',sans-serif;font-weight:bold;text-shadow:0 0 1.5px rgba(255,255,255,.45);">%</span>
<span class="t" style="left:1833.00px;top:648.12px;font-size:21px;color:#fff;font-family:'Liberation Sans',sans-serif;font-weight:bold;letter-spacing:0.320px;text-shadow:0 0 1.5px rgba(255,255,255,.45);">Barometer</span>
<span class="t" style="left:1847.40px;top:676.52px;font-size:21px;color:#fff;font-family:'Liberation Sans',sans-serif;font-weight:bold;letter-spacing:-0.246px;text-shadow:0 0 1.5px rgba(255,255,255,.45);">mmHg</span>
<div class="b" style="left:150.5px;top:656.5px;width:28px;height:28px;background:#fff;border:2.3px solid #2a3f66;border-radius:2px;box-shadow:0 0 0 1px rgba(200,215,240,.5);"></div>
<div class="b" style="left:0;top:0;width:2103px;height:1421px;overflow:hidden;"><div class="b" style="left:150.8px;top:732.4px;width:27.2px;height:26.3px;background:#fff;border:2.3px solid #2b2b2b;border-radius:2.5px;"></div>
<span class="t" style="left:216.70px;top:719.42px;font-size:21px;color:#161616;font-family:'Liberation Sans',sans-serif;letter-spacing:0.106px;-webkit-text-stroke:0.22px #161616;">11/15/2019</span>
<span class="t" style="left:210.80px;top:755.22px;font-size:21px;color:#161616;font-family:'Liberation Sans',sans-serif;letter-spacing:-0.408px;-webkit-text-stroke:0.22px #161616;">01:45:58 PM</span>
<span class="t" style="left:350.80px;top:716.82px;font-size:21px;color:#161616;font-family:'Liberation Sans',sans-serif;letter-spacing:0.106px;-webkit-text-stroke:0.22px #161616;">11/17/2019</span>
<span class="t" style="left:345.00px;top:752.42px;font-size:21px;color:#161616;font-family:'Liberation Sans',sans-serif;letter-spacing:0.014px;-webkit-text-stroke:0.22px #161616;">11:45:58 AM</span>
<span class="t" style="left:479.30px;top:733.02px;font-size:21px;color:#161616;font-family:'Liberation Sans',sans-serif;letter-spacing:-0.363px;-webkit-text-stroke:0.22px #161616;">MOCON User</span>
<span class="t" style="left:651.00px;top:732.77px;font-size:21.3px;color:#161616;font-family:'Liberation Sans',sans-serif;letter-spacing:-0.419px;-webkit-text-stroke:0.22px #161616;">255</span>
<span class="t" style="left:743.30px;top:737.15px;font-size:16.6px;color:#161616;font-family:'Liberation Sans',sans-serif;letter-spacing:-0.105px;-webkit-text-stroke:0.22px #161616;">FCA-5856482</span>
<span class="t" style="left:876.70px;top:737.40px;font-size:16.3px;color:#161616;font-family:'Liberation Sans',sans-serif;letter-spacing:0.060px;-webkit-text-stroke:0.22px #161616;">CFA 5856482-1</span>
<span class="t" style="left:1024.00px;top:732.60px;font-size:21.5px;color:#161616;font-family:'Liberation Sans',sans-serif;-webkit-text-stroke:0.22px #161616;">A</span>
<span class="t" style="left:1085.70px;top:732.60px;font-size:21.5px;color:#161616;font-family:'Liberation Sans',sans-serif;letter-spacing:0.248px;-webkit-text-stroke:0.22px #161616;">493.95</span>
<span class="t" style="left:1161.00px;top:736.64px;font-size:17.2px;color:#161616;font-family:'Liberation Sans',sans-serif;letter-spacing:0.146px;-webkit-text-stroke:0.22px #161616;">cc/(m2.day)</span>
<span class="t" style="left:1346.70px;top:732.60px;font-size:21.5px;color:#161616;font-family:'Liberation Sans',sans-serif;letter-spacing:0.085px;-webkit-text-stroke:0.22px #161616;">29</span>
<span class="t" style="left:1453.30px;top:732.60px;font-size:21.5px;color:#161616;font-family:'Liberation Sans',sans-serif;letter-spacing:0.056px;-webkit-text-stroke:0.22px #161616;">0.0</span>
<span class="t" style="left:1572.70px;top:732.60px;font-size:21.5px;color:#161616;font-family:'Liberation Sans',sans-serif;letter-spacing:0.056px;-webkit-text-stroke:0.22px #161616;">0.0</span>
<span class="t" style="left:1693.30px;top:732.60px;font-size:21.5px;color:#161616;font-family:'Liberation Sans',sans-serif;letter-spacing:-0.086px;-webkit-text-stroke:0.22px #161616;">100</span>
<span class="t" style="left:1860.00px;top:732.60px;font-size:21.5px;color:#161616;font-family:'Liberation Sans',sans-serif;letter-spacing:-0.086px;-webkit-text-stroke:0.22px #161616;">737</span>
<div class="b" style="left:150.8px;top:817.2px;width:27.2px;height:26.3px;background:#fff;border:2.3px solid #2b2b2b;border-radius:2.5px;"></div>
<span class="t" style="left:216.70px;top:801.82px;font-size:21px;color:#161616;font-family:'Liberation Sans',sans-serif;letter-spacing:0.106px;-webkit-text-stroke:0.22px #161616;">11/15/2019</span>
<span class="t" style="left:210.80px;top:837.62px;font-size:21px;color:#161616;font-family:'Liberation Sans',sans-serif;letter-spacing:-0.408px;-webkit-text-stroke:0.22px #161616;">01:45:58 PM</span>
<span class="t" style="left:350.80px;top:805.82px;font-size:21px;color:#161616;font-family:'Liberation Sans',sans-serif;letter-spacing:0.106px;-webkit-text-stroke:0.22px #161616;">11/17/2019</span>
<span class="t" style="left:345.00px;top:840.82px;font-size:21px;color:#161616;font-family:'Liberation Sans',sans-serif;letter-spacing:0.014px;-webkit-text-stroke:0.22px #161616;">11:45:58 AM</span>
<span class="t" style="left:478.30px;top:817.62px;font-size:21px;color:#161616;font-family:'Liberation Sans',sans-serif;letter-spacing:-0.363px;-webkit-text-stroke:0.22px #161616;">MOCON User</span>
<span class="t" style="left:650.50px;top:817.37px;font-size:21.3px;color:#161616;font-family:'Liberation Sans',sans-serif;letter-spacing:-0.419px;-webkit-text-stroke:0.22px #161616;">256</span>
<span class="t" style="left:742.80px;top:821.75px;font-size:16.6px;color:#161616;font-family:'Liberation Sans',sans-serif;letter-spacing:-0.105px;-webkit-text-stroke:0.22px #161616;">FCA-5856482</span>
<span class="t" style="left:876.00px;top:822.00px;font-size:16.3px;color:#161616;font-family:'Liberation Sans',sans-serif;letter-spacing:0.060px;-webkit-text-stroke:0.22px #161616;">CFA 5856482-1</span>
<span class="t" style="left:1023.00px;top:817.20px;font-size:21.5px;color:#161616;font-family:'Liberation Sans',sans-serif;-webkit-text-stroke:0.22px #161616;">A</span>
<span class="t" style="left:1078.30px;top:817.20px;font-size:21.5px;color:#161616;font-family:'Liberation Sans',sans-serif;letter-spacing:0.280px;-webkit-text-stroke:0.22px #161616;">3059.95</span>
<span class="t" style="left:1165.70px;top:821.24px;font-size:17.2px;color:#161616;font-family:'Liberation Sans',sans-serif;letter-spacing:0.116px;-webkit-text-stroke:0.22px #161616;">cc/(m2.day)</span>
<span class="t" style="left:1351.70px;top:817.20px;font-size:21.5px;color:#161616;font-family:'Liberation Sans',sans-serif;letter-spacing:0.085px;-webkit-text-stroke:0.22px #161616;">29</span>
<span class="t" style="left:1458.30px;top:817.20px;font-size:21.5px;color:#161616;font-family:'Liberation Sans',sans-serif;letter-spacing:0.056px;-webkit-text-stroke:0.22px #161616;">0.0</span>
<span class="t" style="left:1577.70px;top:817.20px;font-size:21.5px;color:#161616;font-family:'Liberation Sans',sans-serif;letter-spacing:0.056px;-webkit-text-stroke:0.22px #161616;">0.0</span>
<span class="t" style="left:1698.30px;top:817.20px;font-size:21.5px;color:#161616;font-family:'Liberation Sans',sans-serif;letter-spacing:-0.086px;-webkit-text-stroke:0.22px #161616;">100</span>
<span class="t" style="left:1865.00px;top:817.20px;font-size:21.5px;color:#161616;font-family:'Liberation Sans',sans-serif;letter-spacing:-0.086px;-webkit-text-stroke:0.22px #161616;">737</span>
<div class="b" style="left:150.8px;top:899px;width:27.2px;height:26.3px;background:#fff;border:2.3px solid #2b2b2b;border-radius:2.5px;"></div>
<span class="t" style="left:216.70px;top:881.42px;font-size:21px;color:#161616;font-family:'Liberation Sans',sans-serif;letter-spacing:0.106px;-webkit-text-stroke:0.22px #161616;">11/15/2019</span>
<span class="t" style="left:210.80px;top:916.42px;font-size:21px;color:#161616;font-family:'Liberation Sans',sans-serif;letter-spacing:-0.408px;-webkit-text-stroke:0.22px #161616;">01:45:58 PM</span>
<span class="t" style="left:350.80px;top:888.42px;font-size:21px;color:#161616;font-family:'Liberation Sans',sans-serif;letter-spacing:0.106px;-webkit-text-stroke:0.22px #161616;">11/17/2019</span>
<span class="t" style="left:345.00px;top:923.22px;font-size:21px;color:#161616;font-family:'Liberation Sans',sans-serif;letter-spacing:0.014px;-webkit-text-stroke:0.22px #161616;">11:45:58 AM</span>
<span class="t" style="left:479.30px;top:899.72px;font-size:21px;color:#161616;font-family:'Liberation Sans',sans-serif;letter-spacing:-0.363px;-webkit-text-stroke:0.22px #161616;">MOCON User</span>
<span class="t" style="left:651.00px;top:899.47px;font-size:21.3px;color:#161616;font-family:'Liberation Sans',sans-serif;letter-spacing:-0.419px;-webkit-text-stroke:0.22px #161616;">257</span>
<span class="t" style="left:743.30px;top:903.85px;font-size:16.6px;color:#161616;font-family:'Liberation Sans',sans-serif;letter-spacing:-0.105px;-webkit-text-stroke:0.22px #161616;">FCA-5856482</span>
<span class="t" style="left:876.70px;top:904.10px;font-size:16.3px;color:#161616;font-family:'Liberation Sans',sans-serif;letter-spacing:0.060px;-webkit-text-stroke:0.22px #161616;">CFA 5856482-1</span>
<span class="t" style="left:1024.00px;top:899.30px;font-size:21.5px;color:#161616;font-family:'Liberation Sans',sans-serif;-webkit-text-stroke:0.22px #161616;">B</span>
<span class="t" style="left:1077.30px;top:899.30px;font-size:21.5px;color:#161616;font-family:'Liberation Sans',sans-serif;letter-spacing:0.188px;-webkit-text-stroke:0.22px #161616;">0.1907</span>
<span class="t" style="left:1152.30px;top:903.34px;font-size:17.2px;color:#161616;font-family:'Liberation Sans',sans-serif;letter-spacing:0.157px;-webkit-text-stroke:0.22px #161616;">cc/(pkg.day)</span>
<span class="t" style="left:1342.90px;top:899.30px;font-size:21.5px;color:#161616;font-family:'Liberation Sans',sans-serif;letter-spacing:0.085px;-webkit-text-stroke:0.22px #161616;">29</span>
<span class="t" style="left:1449.30px;top:899.30px;font-size:21.5px;color:#161616;font-family:'Liberation Sans',sans-serif;letter-spacing:0.056px;-webkit-text-stroke:0.22px #161616;">0.0</span>
<span class="t" style="left:1569.00px;top:899.30px;font-size:21.5px;color:#161616;font-family:'Liberation Sans',sans-serif;letter-spacing:0.056px;-webkit-text-stroke:0.22px #161616;">0.0</span>
<span class="t" style="left:1689.30px;top:899.30px;font-size:21.5px;color:#161616;font-family:'Liberation Sans',sans-serif;letter-spacing:-0.086px;-webkit-text-stroke:0.22px #161616;">100</span>
<span class="t" style="left:1856.00px;top:899.30px;font-size:21.5px;color:#161616;font-family:'Liberation Sans',sans-serif;letter-spacing:-0.086px;-webkit-text-stroke:0.22px #161616;">737</span>
<div class="b" style="left:150.8px;top:981.6px;width:27.2px;height:26.3px;background:#fff;border:2.3px solid #2b2b2b;border-radius:2.5px;"></div>
<span class="t" style="left:216.70px;top:960.72px;font-size:21px;color:#161616;font-family:'Liberation Sans',sans-serif;letter-spacing:0.106px;-webkit-text-stroke:0.22px #161616;">11/15/2019</span>
<span class="t" style="left:210.80px;top:996.32px;font-size:21px;color:#161616;font-family:'Liberation Sans',sans-serif;letter-spacing:-0.408px;-webkit-text-stroke:0.22px #161616;">01:45:58 PM</span>
<span class="t" style="left:350.80px;top:965.02px;font-size:21px;color:#161616;font-family:'Liberation Sans',sans-serif;letter-spacing:0.106px;-webkit-text-stroke:0.22px #161616;">11/17/2019</span>
<span class="t" style="left:345.00px;top:1000.02px;font-size:21px;color:#161616;font-family:'Liberation Sans',sans-serif;letter-spacing:0.014px;-webkit-text-stroke:0.22px #161616;">11:45:58 AM</span>
<span class="t" style="left:479.30px;top:981.62px;font-size:21px;color:#161616;font-family:'Liberation Sans',sans-serif;letter-spacing:-0.363px;-webkit-text-stroke:0.22px #161616;">MOCON User</span>
<span class="t" style="left:651.00px;top:981.37px;font-size:21.3px;color:#161616;font-family:'Liberation Sans',sans-serif;letter-spacing:-0.419px;-webkit-text-stroke:0.22px #161616;">258</span>
<span class="t" style="left:743.30px;top:985.75px;font-size:16.6px;color:#161616;font-family:'Liberation Sans',sans-serif;letter-spacing:-0.105px;-webkit-text-stroke:0.22px #161616;">FCA-5856482</span>
<span class="t" style="left:876.70px;top:986.00px;font-size:16.3px;color:#161616;font-family:'Liberation Sans',sans-serif;letter-spacing:0.060px;-webkit-text-stroke:0.22px #161616;">CFA 5856482-1</span>
<span class="t" style="left:1024.00px;top:981.20px;font-size:21.5px;color:#161616;font-family:'Liberation Sans',sans-serif;-webkit-text-stroke:0.22px #161616;">A</span>
<span class="t" style="left:1085.70px;top:981.20px;font-size:21.5px;color:#161616;font-family:'Liberation Sans',sans-serif;letter-spacing:0.248px;-webkit-text-stroke:0.22px #161616;">293.95</span>
<span class="t" style="left:1161.00px;top:985.24px;font-size:17.2px;color:#161616;font-family:'Liberation Sans',sans-serif;letter-spacing:0.146px;-webkit-text-stroke:0.22px #161616;">cc/(m2.day)</span>
<span class="t" style="left:1346.70px;top:981.20px;font-size:21.5px;color:#161616;font-family:'Liberation Sans',sans-serif;letter-spacing:0.085px;-webkit-text-stroke:0.22px #161616;">29</span>
<span class="t" style="left:1453.30px;top:981.20px;font-size:21.5px;color:#161616;font-family:'Liberation Sans',sans-serif;letter-spacing:0.056px;-webkit-text-stroke:0.22px #161616;">0.0</span>
<span class="t" style="left:1572.70px;top:981.20px;font-size:21.5px;color:#161616;font-family:'Liberation Sans',sans-serif;letter-spacing:0.056px;-webkit-text-stroke:0.22px #161616;">0.0</span>
<span class="t" style="left:1693.30px;top:981.20px;font-size:21.5px;color:#161616;font-family:'Liberation Sans',sans-serif;letter-spacing:-0.086px;-webkit-text-stroke:0.22px #161616;">100</span>
<span class="t" style="left:1860.00px;top:981.20px;font-size:21.5px;color:#161616;font-family:'Liberation Sans',sans-serif;letter-spacing:-0.086px;-webkit-text-stroke:0.22px #161616;">737</span>
<div class="b" style="left:150.8px;top:1060.6px;width:27.2px;height:26.3px;background:#fff;border:2.3px solid #2b2b2b;border-radius:2.5px;"></div>
<span class="t" style="left:211.70px;top:1046.62px;font-size:21px;color:#161616;font-family:'Liberation Sans',sans-serif;letter-spacing:0.106px;-webkit-text-stroke:0.22px #161616;">11/15/2019</span>
<span class="t" style="left:206.00px;top:1081.42px;font-size:21px;color:#161616;font-family:'Liberation Sans',sans-serif;letter-spacing:-0.408px;-webkit-text-stroke:0.22px #161616;">01:45:58 PM</span>
<span class="t" style="left:350.80px;top:1047.42px;font-size:21px;color:#161616;font-family:'Liberation Sans',sans-serif;letter-spacing:0.106px;-webkit-text-stroke:0.22px #161616;">11/17/2019</span>
<span class="t" style="left:345.00px;top:1082.42px;font-size:21px;color:#161616;font-family:'Liberation Sans',sans-serif;letter-spacing:0.014px;-webkit-text-stroke:0.22px #161616;">11:45:58 AM</span>
<span class="t" style="left:479.30px;top:1056.52px;font-size:21px;color:#161616;font-family:'Liberation Sans',sans-serif;letter-spacing:-0.363px;-webkit-text-stroke:0.22px #161616;">MOCON User</span>
<span class="t" style="left:651.00px;top:1056.27px;font-size:21.3px;color:#161616;font-family:'Liberation Sans',sans-serif;letter-spacing:-0.419px;-webkit-text-stroke:0.22px #161616;">259</span>
<span class="t" style="left:743.30px;top:1060.65px;font-size:16.6px;color:#161616;font-family:'Liberation Sans',sans-serif;letter-spacing:-0.105px;-webkit-text-stroke:0.22px #161616;">FCA-5856482</span>
<span class="t" style="left:876.70px;top:1060.90px;font-size:16.3px;color:#161616;font-family:'Liberation Sans',sans-serif;letter-spacing:0.060px;-webkit-text-stroke:0.22px #161616;">CFA 5856482-1</span>
<span class="t" style="left:1024.00px;top:1056.10px;font-size:21.5px;color:#161616;font-family:'Liberation Sans',sans-serif;-webkit-text-stroke:0.22px #161616;">B</span>
<span class="t" style="left:1098.30px;top:1056.10px;font-size:21.5px;color:#161616;font-family:'Liberation Sans',sans-serif;letter-spacing:0.049px;-webkit-text-stroke:0.22px #161616;">30.04</span>
<span class="t" style="left:1160.00px;top:1060.14px;font-size:17.2px;color:#161616;font-family:'Liberation Sans',sans-serif;letter-spacing:0.116px;-webkit-text-stroke:0.22px #161616;">cc/(m2.day)</span>
<span class="t" style="left:1346.00px;top:1056.10px;font-size:21.5px;color:#161616;font-family:'Liberation Sans',sans-serif;letter-spacing:0.085px;-webkit-text-stroke:0.22px #161616;">29</span>
<span class="t" style="left:1452.70px;top:1056.10px;font-size:21.5px;color:#161616;font-family:'Liberation Sans',sans-serif;letter-spacing:0.056px;-webkit-text-stroke:0.22px #161616;">0.0</span>
<span class="t" style="left:1572.30px;top:1056.10px;font-size:21.5px;color:#161616;font-family:'Liberation Sans',sans-serif;letter-spacing:0.056px;-webkit-text-stroke:0.22px #161616;">0.0</span>
<span class="t" style="left:1692.70px;top:1056.10px;font-size:21.5px;color:#161616;font-family:'Liberation Sans',sans-serif;letter-spacing:-0.086px;-webkit-text-stroke:0.22px #161616;">100</span>
<span class="t" style="left:1859.30px;top:1056.10px;font-size:21.5px;color:#161616;font-family:'Liberation Sans',sans-serif;letter-spacing:-0.086px;-webkit-text-stroke:0.22px #161616;">737</span>
<div class="b" style="left:150.8px;top:1143.3px;width:27.2px;height:26.3px;background:#fff;border:2.3px solid #2b2b2b;border-radius:2.5px;"></div>
<span class="t" style="left:214.00px;top:1126.62px;font-size:21px;color:#161616;font-family:'Liberation Sans',sans-serif;letter-spacing:0.106px;-webkit-text-stroke:0.22px #161616;">11/15/2019</span>
<span class="t" style="left:207.30px;top:1161.62px;font-size:21px;color:#161616;font-family:'Liberation Sans',sans-serif;letter-spacing:-0.408px;-webkit-text-stroke:0.22px #161616;">01:45:58 PM</span>
<span class="t" style="left:350.80px;top:1130.62px;font-size:21px;color:#161616;font-family:'Liberation Sans',sans-serif;letter-spacing:0.106px;-webkit-text-stroke:0.22px #161616;">11/17/2019</span>
<span class="t" style="left:345.00px;top:1165.62px;font-size:21px;color:#161616;font-family:'Liberation Sans',sans-serif;letter-spacing:0.014px;-webkit-text-stroke:0.22px #161616;">11:45:58 AM</span>
<span class="t" style="left:478.30px;top:1144.52px;font-size:21px;color:#161616;font-family:'Liberation Sans',sans-serif;letter-spacing:-0.363px;-webkit-text-stroke:0.22px #161616;">MOCON User</span>
<span class="t" style="left:650.50px;top:1144.27px;font-size:21.3px;color:#161616;font-family:'Liberation Sans',sans-serif;letter-spacing:-0.419px;-webkit-text-stroke:0.22px #161616;">260</span>
<span class="t" style="left:742.80px;top:1148.65px;font-size:16.6px;color:#161616;font-family:'Liberation Sans',sans-serif;letter-spacing:-0.105px;-webkit-text-stroke:0.22px #161616;">FCA-5856482</span>
<span class="t" style="left:876.00px;top:1148.90px;font-size:16.3px;color:#161616;font-family:'Liberation Sans',sans-serif;letter-spacing:0.060px;-webkit-text-stroke:0.22px #161616;">CFA 5856482-1</span>
<span class="t" style="left:1023.00px;top:1144.10px;font-size:21.5px;color:#161616;font-family:'Liberation Sans',sans-serif;-webkit-text-stroke:0.22px #161616;">A</span>
<span class="t" style="left:1085.00px;top:1144.10px;font-size:21.5px;color:#161616;font-family:'Liberation Sans',sans-serif;letter-spacing:0.248px;-webkit-text-stroke:0.22px #161616;">493.95</span>
<span class="t" style="left:1160.00px;top:1148.14px;font-size:17.2px;color:#161616;font-family:'Liberation Sans',sans-serif;letter-spacing:0.116px;-webkit-text-stroke:0.22px #161616;">cc/(m2.day)</span>
<span class="t" style="left:1346.00px;top:1144.10px;font-size:21.5px;color:#161616;font-family:'Liberation Sans',sans-serif;letter-spacing:0.085px;-webkit-text-stroke:0.22px #161616;">29</span>
<span class="t" style="left:1452.30px;top:1144.10px;font-size:21.5px;color:#161616;font-family:'Liberation Sans',sans-serif;letter-spacing:0.056px;-webkit-text-stroke:0.22px #161616;">0.0</span>
<span class="t" style="left:1572.00px;top:1144.10px;font-size:21.5px;color:#161616;font-family:'Liberation Sans',sans-serif;letter-spacing:0.056px;-webkit-text-stroke:0.22px #161616;">0.0</span>
<span class="t" style="left:1692.30px;top:1144.10px;font-size:21.5px;color:#161616;font-family:'Liberation Sans',sans-serif;letter-spacing:-0.086px;-webkit-text-stroke:0.22px #161616;">100</span>
<span class="t" style="left:1859.00px;top:1144.10px;font-size:21.5px;color:#161616;font-family:'Liberation Sans',sans-serif;letter-spacing:-0.086px;-webkit-text-stroke:0.22px #161616;">737</span>
<div class="b" style="left:150.8px;top:1225px;width:27.2px;height:26.3px;background:#fff;border:2.3px solid #2b2b2b;border-radius:2.5px;"></div>
<span class="t" style="left:213.30px;top:1210.52px;font-size:21px;color:#161616;font-family:'Liberation Sans',sans-serif;letter-spacing:0.106px;-webkit-text-stroke:0.22px #161616;">11/15/2019</span>
<span class="t" style="left:207.70px;top:1245.52px;font-size:21px;color:#161616;font-family:'Liberation Sans',sans-serif;letter-spacing:-0.408px;-webkit-text-stroke:0.22px #161616;">01:45:58 PM</span>
<span class="t" style="left:350.80px;top:1208.92px;font-size:21px;color:#161616;font-family:'Liberation Sans',sans-serif;letter-spacing:0.106px;-webkit-text-stroke:0.22px #161616;">11/17/2019</span>
<span class="t" style="left:345.00px;top:1243.92px;font-size:21px;color:#161616;font-family:'Liberation Sans',sans-serif;letter-spacing:0.014px;-webkit-text-stroke:0.22px #161616;">11:45:58 AM</span>
<span class="t" style="left:480.00px;top:1227.22px;font-size:21px;color:#161616;font-family:'Liberation Sans',sans-serif;letter-spacing:-0.363px;-webkit-text-stroke:0.22px #161616;">MOCON User</span>
<span class="t" style="left:651.70px;top:1226.97px;font-size:21.3px;color:#161616;font-family:'Liberation Sans',sans-serif;letter-spacing:-0.419px;-webkit-text-stroke:0.22px #161616;">261</span>
<span class="t" style="left:743.30px;top:1231.35px;font-size:16.6px;color:#161616;font-family:'Liberation Sans',sans-serif;letter-spacing:-0.105px;-webkit-text-stroke:0.22px #161616;">FCA-5856482</span>
<span class="t" style="left:876.70px;top:1231.60px;font-size:16.3px;color:#161616;font-family:'Liberation Sans',sans-serif;letter-spacing:0.060px;-webkit-text-stroke:0.22px #161616;">CFA 5856482-1</span>
<span class="t" style="left:1024.00px;top:1226.80px;font-size:21.5px;color:#161616;font-family:'Liberation Sans',sans-serif;-webkit-text-stroke:0.22px #161616;">B</span>
<span class="t" style="left:1085.70px;top:1226.80px;font-size:21.5px;color:#161616;font-family:'Liberation Sans',sans-serif;letter-spacing:0.048px;-webkit-text-stroke:0.22px #161616;">156.95</span>
<span class="t" style="left:1160.00px;top:1230.84px;font-size:17.2px;color:#161616;font-family:'Liberation Sans',sans-serif;letter-spacing:0.116px;-webkit-text-stroke:0.22px #161616;">cc/(m2.day)</span>
<span class="t" style="left:1346.00px;top:1226.80px;font-size:21.5px;color:#161616;font-family:'Liberation Sans',sans-serif;letter-spacing:0.085px;-webkit-text-stroke:0.22px #161616;">32</span>
<span class="t" style="left:1452.30px;top:1226.80px;font-size:21.5px;color:#161616;font-family:'Liberation Sans',sans-serif;letter-spacing:0.056px;-webkit-text-stroke:0.22px #161616;">0.0</span>
<span class="t" style="left:1571.70px;top:1226.80px;font-size:21.5px;color:#161616;font-family:'Liberation Sans',sans-serif;letter-spacing:0.056px;-webkit-text-stroke:0.22px #161616;">0.0</span>
<span class="t" style="left:1692.30px;top:1226.80px;font-size:21.5px;color:#161616;font-family:'Liberation Sans',sans-serif;letter-spacing:-0.086px;-webkit-text-stroke:0.22px #161616;">100</span>
<span class="t" style="left:1859.30px;top:1226.80px;font-size:21.5px;color:#161616;font-family:'Liberation Sans',sans-serif;letter-spacing:-0.086px;-webkit-text-stroke:0.22px #161616;">737</span>
<div class="b" style="left:150.8px;top:1306px;width:27.2px;height:26.3px;background:#fff;border:2.3px solid #2b2b2b;border-radius:2.5px;"></div>
<span class="t" style="left:211.70px;top:1286.52px;font-size:21px;color:#161616;font-family:'Liberation Sans',sans-serif;letter-spacing:0.106px;-webkit-text-stroke:0.22px #161616;">11/15/2019</span>
<span class="t" style="left:206.00px;top:1321.52px;font-size:21px;color:#161616;font-family:'Liberation Sans',sans-serif;letter-spacing:-0.408px;-webkit-text-stroke:0.22px #161616;">01:45:58 PM</span>
<span class="t" style="left:352.30px;top:1291.52px;font-size:21px;color:#161616;font-family:'Liberation Sans',sans-serif;letter-spacing:0.106px;-webkit-text-stroke:0.22px #161616;">11/17/2019</span>
<span class="t" style="left:346.70px;top:1326.52px;font-size:21px;color:#161616;font-family:'Liberation Sans',sans-serif;letter-spacing:0.014px;-webkit-text-stroke:0.22px #161616;">11:45:58 AM</span>
<span class="t" style="left:480.00px;top:1306.22px;font-size:21px;color:#161616;font-family:'Liberation Sans',sans-serif;letter-spacing:-0.363px;-webkit-text-stroke:0.22px #161616;">MOCON User</span>
<span class="t" style="left:651.70px;top:1305.97px;font-size:21.3px;color:#161616;font-family:'Liberation Sans',sans-serif;letter-spacing:-0.419px;-webkit-text-stroke:0.22px #161616;">262</span>
<span class="t" style="left:743.30px;top:1310.35px;font-size:16.6px;color:#161616;font-family:'Liberation Sans',sans-serif;letter-spacing:-0.105px;-webkit-text-stroke:0.22px #161616;">FCA-5856482</span>
<span class="t" style="left:876.70px;top:1310.60px;font-size:16.3px;color:#161616;font-family:'Liberation Sans',sans-serif;letter-spacing:0.060px;-webkit-text-stroke:0.22px #161616;">CFA 5856482-1</span>
<span class="t" style="left:1024.00px;top:1305.80px;font-size:21.5px;color:#161616;font-family:'Liberation Sans',sans-serif;-webkit-text-stroke:0.22px #161616;">A</span>
<span class="t" style="left:1086.70px;top:1305.80px;font-size:21.5px;color:#161616;font-family:'Liberation Sans',sans-serif;letter-spacing:-0.082px;-webkit-text-stroke:0.22px #161616;">0.00</span>
<span class="t" style="left:1156.70px;top:1309.84px;font-size:17.2px;color:#161616;font-family:'Liberation Sans',sans-serif;letter-spacing:0.176px;-webkit-text-stroke:0.22px #161616;">cc/(m2.day)</span>
<span class="t" style="left:1350.00px;top:1305.80px;font-size:21.5px;color:#161616;font-family:'Liberation Sans',sans-serif;letter-spacing:0.085px;-webkit-text-stroke:0.22px #161616;">32</span>
<span class="t" style="left:1455.70px;top:1305.80px;font-size:21.5px;color:#161616;font-family:'Liberation Sans',sans-serif;letter-spacing:0.056px;-webkit-text-stroke:0.22px #161616;">0.0</span>
<span class="t" style="left:1575.70px;top:1305.80px;font-size:21.5px;color:#161616;font-family:'Liberation Sans',sans-serif;letter-spacing:0.056px;-webkit-text-stroke:0.22px #161616;">0.0</span>
<span class="t" style="left:1696.70px;top:1305.80px;font-size:21.5px;color:#161616;font-family:'Liberation Sans',sans-serif;letter-spacing:-0.086px;-webkit-text-stroke:0.22px #161616;">100</span>
<span class="t" style="left:1863.30px;top:1305.80px;font-size:21.5px;color:#161616;font-family:'Liberation Sans',sans-serif;letter-spacing:-0.086px;-webkit-text-stroke:0.22px #161616;">737</span>
<div class="b" style="left:150.8px;top:1391px;width:27.2px;height:26.3px;background:#fff;border:2.3px solid #2b2b2b;border-radius:2.5px;"></div>
<span class="t" style="left:214.00px;top:1372.22px;font-size:21px;color:#161616;font-family:'Liberation Sans',sans-serif;letter-spacing:0.106px;-webkit-text-stroke:0.22px #161616;">11/15/2019</span>
<span class="t" style="left:208.30px;top:1407.22px;font-size:21px;color:#161616;font-family:'Liberation Sans',sans-serif;letter-spacing:-0.408px;-webkit-text-stroke:0.22px #161616;">01:45:58 PM</span>
<span class="t" style="left:343.30px;top:1372.22px;font-size:21px;color:#161616;font-family:'Liberation Sans',sans-serif;letter-spacing:0.106px;-webkit-text-stroke:0.22px #161616;">11/17/2019</span>
<span class="t" style="left:337.30px;top:1407.22px;font-size:21px;color:#161616;font-family:'Liberation Sans',sans-serif;letter-spacing:0.014px;-webkit-text-stroke:0.22px #161616;">11:45:58 AM</span>
<span class="t" style="left:478.50px;top:1385.52px;font-size:21px;color:#161616;font-family:'Liberation Sans',sans-serif;letter-spacing:-0.363px;-webkit-text-stroke:0.22px #161616;">MOCON User</span>
<span class="t" style="left:651.00px;top:1385.27px;font-size:21.3px;color:#161616;font-family:'Liberation Sans',sans-serif;letter-spacing:-0.419px;-webkit-text-stroke:0.22px #161616;">263</span>
<span class="t" style="left:742.70px;top:1389.65px;font-size:16.6px;color:#161616;font-family:'Liberation Sans',sans-serif;letter-spacing:-0.105px;-webkit-text-stroke:0.22px #161616;">FCA-5856482</span>
<span class="t" style="left:876.00px;top:1389.90px;font-size:16.3px;color:#161616;font-family:'Liberation Sans',sans-serif;letter-spacing:0.060px;-webkit-text-stroke:0.22px #161616;">CFA 5856482-1</span>
<span class="t" style="left:1023.30px;top:1385.10px;font-size:21.5px;color:#161616;font-family:'Liberation Sans',sans-serif;-webkit-text-stroke:0.22px #161616;">A</span>
<span class="t" style="left:1085.70px;top:1385.10px;font-size:21.5px;color:#161616;font-family:'Liberation Sans',sans-serif;letter-spacing:0.248px;-webkit-text-stroke:0.22px #161616;">0.0004</span>
<span class="t" style="left:1160.70px;top:1389.14px;font-size:17.2px;color:#161616;font-family:'Liberation Sans',sans-serif;letter-spacing:0.211px;-webkit-text-stroke:0.22px #161616;">cc/(pkg.day)</span>
<span class="t" style="left:1351.70px;top:1385.10px;font-size:21.5px;color:#161616;font-family:'Liberation Sans',sans-serif;letter-spacing:0.085px;-webkit-text-stroke:0.22px #161616;">32</span>
<span class="t" style="left:1457.70px;top:1385.10px;font-size:21.5px;color:#161616;font-family:'Liberation Sans',sans-serif;letter-spacing:0.085px;-webkit-text-stroke:0.22px #161616;">90</span>
<span class="t" style="left:1571.70px;top:1385.10px;font-size:21.5px;color:#161616;font-family:'Liberation Sans',sans-serif;letter-spacing:0.385px;-webkit-text-stroke:0.22px #161616;">56</span>
<span class="t" style="left:1686.70px;top:1385.10px;font-size:21.5px;color:#161616;font-family:'Liberation Sans',sans-serif;letter-spacing:-0.086px;-webkit-text-stroke:0.22px #161616;">100</span>
<span class="t" style="left:1853.30px;top:1385.10px;font-size:21.5px;color:#161616;font-family:'Liberation Sans',sans-serif;letter-spacing:-0.086px;-webkit-text-stroke:0.22px #161616;">737</span></div>
<div class="b" style="left:7px;top:1509px;width:2087px;height:30px;background:linear-gradient(#a4b9d8 0px,#b7cae6 1.5px,#bccee8 5px,#cfdcf0 7px,#d6e2f3 10px,#dae5f4 17px,#d0def1 23px,#c2d3eb 27px,#cfdcf0 30px);"></div>
<div class="b" style="left:7px;top:1539px;width:2087px;height:34px;background:linear-gradient(#e9f1fb,#ffffff);"></div>
<svg style="left:880px;top:1519px" width="20" height="14"><rect x="0.7" y="0.7" width="17" height="11.5" fill="#eef3fa" stroke="#9fb2cc" stroke-width="1.2"/><path d="M1,1.2 L9.2,8 L17.4,1.2" fill="none" stroke="#9fb2cc" stroke-width="1.1"/></svg>
<span class="t" style="left:900.60px;top:1519.03px;font-size:14.5px;color:#27517f;font-family:'Liberation Sans',sans-serif;font-weight:bold;letter-spacing:-0.304px;">Contact Us</span>
<svg style="left:990px;top:1517px" width="20" height="16"><path d="M1,2.5 C4,1 7,1.2 9,3 C11,1.2 14,1 17,2.5 V13.5 C14,12.3 11,12.5 9,14 C7,12.5 4,12.3 1,13.5 Z" fill="#f3f6fb" stroke="#5f7796" stroke-width="1.3"/><path d="M9,3V14" stroke="#5f7796" stroke-width="1.2"/></svg>
<span class="t" style="left:1010.00px;top:1519.03px;font-size:14.5px;color:#27517f;font-family:'Liberation Sans',sans-serif;font-weight:bold;letter-spacing:-0.595px;">User Guide</span>
<svg style="left:0;top:0" width="2103" height="1650"><path d="M789.5,1590.5 L794,1583 L805,1583 L800.5,1590.5 Z" fill="#d9262c"/></svg>
<span class="t" style="left:796.50px;top:1560.55px;font-size:35.5px;color:#0a0a0a;font-family:'Liberation Sans',sans-serif;font-weight:bold;font-style:italic;transform:scaleX(1.1275);transform-origin:0 0;-webkit-text-stroke:2px #0a0a0a;">AMETEK</span>
<span class="t" style="left:966.00px;top:1566.23px;font-size:8px;color:#555;font-family:'Liberation Sans',sans-serif;">®</span>
<div class="b" style="left:994px;top:1552px;width:1.6px;height:45px;background:#222;"></div>
<span class="t" style="left:1017.00px;top:1548.60px;font-size:49.5px;color:#0a0a0a;font-family:'Liberation Sans',sans-serif;transform:scaleX(0.9053);transform-origin:0 0;">mocon</span>
<span class="t" style="left:1151.00px;top:1566.65px;font-size:7.5px;color:#555;font-family:'Liberation Sans',sans-serif;">®</span>
<svg style="left:0;top:0" width="2103" height="1650"><path d="M1050.4,1559.4 A21,21 0 0 1 1054.4,1552.0 L1057.1,1554.3 A17.5,17.5 0 0 0 1053.8,1560.4 Z" fill="#dc2a2e"/><path d="M1054.3,1549.9 A22.5,22.5 0 0 1 1062.1,1544.6 L1064.1,1549.7 A17,17 0 0 0 1058.3,1553.7 Z" fill="#dc2a2e"/><path d="M1063.1,1542.7 A24,24 0 0 1 1074.7,1541.9 L1073.4,1549.3 A16.5,16.5 0 0 0 1065.4,1549.8 Z" fill="#dc2a2e"/><path d="M1076.5,1541.2 A25,25 0 0 1 1087.9,1547.5 L1081.6,1554.0 A16,16 0 0 0 1074.4,1550.0 Z" fill="#dc2a2e"/><path d="M1089.5,1548.4 A25.5,25.5 0 0 1 1095.8,1562.0 L1085.8,1563.3 A15.5,15.5 0 0 0 1082.0,1555.1 Z" fill="#dc2a2e"/></svg>
<span class="t" style="left:900.00px;top:1600.46px;font-size:13.4px;color:#3e5f80;font-family:'Liberation Sans',sans-serif;font-weight:bold;letter-spacing:0.063px;">© Copyright Celtrak 2012</span>
<span class="t" style="left:919.00px;top:1616.16px;font-size:13.4px;color:#3e5f80;font-family:'Liberation Sans',sans-serif;font-weight:bold;letter-spacing:-0.172px;">All Rights Reserved</span>
</body></html>
